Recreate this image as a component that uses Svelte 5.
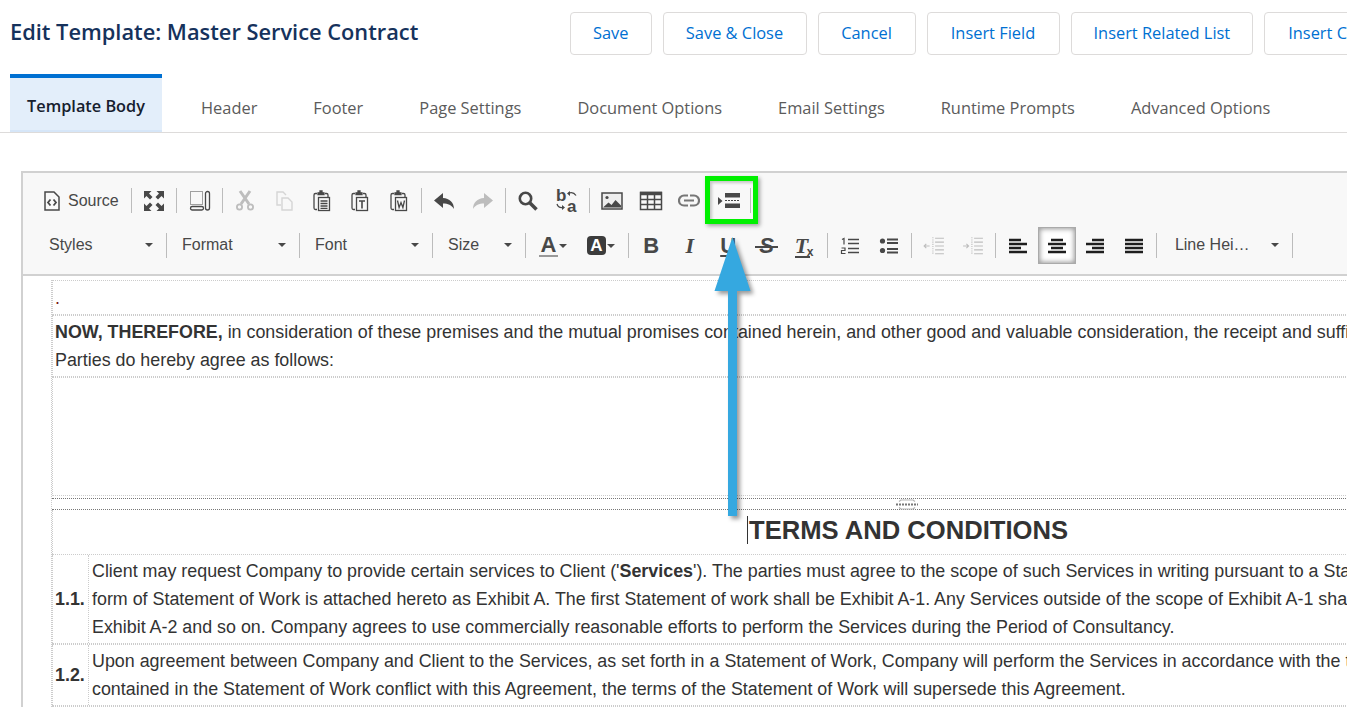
<script>
	// Template editor page: header, tabs and a CKEditor style toolbar over the document body
	const tabs = ['Header', 'Footer', 'Page Settings', 'Document Options', 'Email Settings', 'Runtime Prompts', 'Advanced Options'];
	const actions = ['Save', 'Save & Close', 'Cancel', 'Insert Field', 'Insert Related List', 'Insert Clause'];
</script>

{#snippet caret()}
	<span class="caret"></span>
{/snippet}

<div class="page">
	<header class="top">
		<h1>Edit Template: Master Service Contract</h1>
		<div class="actions">
			{#each actions as a}
				<button class="action">{a}</button>
			{/each}
		</div>
	</header>

	<nav class="tabs">
		<button class="tab active">Template Body</button>
		{#each tabs as t}
			<button class="tab">{t}</button>
		{/each}
	</nav>

	<section class="editor">
		<div class="toolbar">
			<!-- highlight around the template button -->
			<div class="highlight"></div>

			<div class="row">
				<button class="tb source">
					<svg width="18" height="20" viewBox="0 0 18 20" fill="none" stroke="currentColor">
						<path d="M2 1h9l5 5v13H2z" stroke-width="1.5" />
						<path d="M7.500 8.500 5 11.500l2.500 3M10.500 8.500l2.500 3-2.500 3" stroke-width="1.800" />
					</svg>
					<span>Source</span>
				</button>
				<i class="sep"></i>
				<button class="tb" aria-label="Maximize">
					<svg width="20" height="20" viewBox="0 0 20 20" fill="currentColor">
						<path d="M0 0h7.500L5 2.500 8.500 6 6 8.500 2.500 5 0 7.500z" />
						<path d="M20 0h-7.500L15 2.500 11.500 6 14 8.500 17.500 5 20 7.500z" />
						<path d="M0 20h7.500L5 17.500 8.500 14 6 11.500 2.500 15 0 12.500z" />
						<path d="M20 20h-7.500l2.500-2.500-3.500-3.500 2.500-2.500 3.500 3.500 2.500-2.500z" />
					</svg>
				</button>
				<i class="sep"></i>
				<button class="tb" aria-label="Show blocks">
					<svg width="22" height="22" viewBox="0 0 22 22" fill="none" stroke="currentColor">
						<rect x="1.500" y="1.500" width="12" height="13" stroke-dasharray="1 1" />
						<rect x="1.500" y="16.500" width="13" height="3.500" rx="1.700" stroke-width="1.300" />
						<rect x="16.500" y="1.500" width="4" height="18.500" rx="2" stroke-width="1.300" />
					</svg>
				</button>
				<i class="sep"></i>
				<button class="tb off" aria-label="Cut">
					<svg width="20" height="22" viewBox="0 0 20 22" fill="none" stroke="currentColor">
						<path d="M5 1l9 13M15 1 6 14" stroke-width="3" />
						<circle cx="4.500" cy="17" r="2.600" stroke-width="1.800" />
						<circle cx="15.500" cy="17" r="2.600" stroke-width="1.800" />
					</svg>
				</button>
				<button class="tb off faint" aria-label="Copy">
					<svg width="20" height="22" viewBox="0 0 20 22" fill="none" stroke="currentColor" stroke-width="1.400">
						<path d="M7 15H3V2h6l3 3" />
						<path d="M8 8h6l4 4v8H8z" />
					</svg>
				</button>
				<button class="tb" aria-label="Paste">
					<svg width="20" height="22" viewBox="0 0 20 22" fill="none" stroke="currentColor" stroke-width="1.300">
						<path d="M5 3.500H3.500a1.500 1.500 0 0 0-1.500 1.500v13a1.500 1.500 0 0 0 1.500 1.500H5M13 3.500h1.500A1.500 1.500 0 0 1 16 5v2" />
						<path d="M6 4.500V2.800h2V1h2v1.800h2v1.700z" fill="currentColor" />
						<rect x="6.500" y="7.500" width="11" height="13" fill="#f8f8f8" />
						<path d="M8.500 11h7M8.500 13.500h7M8.500 16h7M8.500 18.300h7" />
					</svg>
				</button>
				<button class="tb" aria-label="Paste as text">
					<svg width="20" height="22" viewBox="0 0 20 22" fill="none" stroke="currentColor" stroke-width="1.300">
						<path d="M5 3.500H3.500a1.500 1.500 0 0 0-1.500 1.500v13a1.500 1.500 0 0 0 1.500 1.500H5M13 3.500h1.500A1.500 1.500 0 0 1 16 5v2" />
						<path d="M6 4.500V2.800h2V1h2v1.800h2v1.700z" fill="currentColor" />
						<rect x="6.500" y="7.500" width="11" height="13" fill="#f8f8f8" />
						<path d="M9 11h6M12 11v7.500" stroke-width="1.600" />
					</svg>
				</button>
				<button class="tb" aria-label="Paste from Word">
					<svg width="20" height="22" viewBox="0 0 20 22" fill="none" stroke="currentColor" stroke-width="1.300">
						<path d="M5 3.500H3.500a1.500 1.500 0 0 0-1.500 1.500v13a1.500 1.500 0 0 0 1.500 1.500H5M13 3.500h1.500A1.500 1.500 0 0 1 16 5v2" />
						<path d="M6 4.500V2.800h2V1h2v1.800h2v1.700z" fill="currentColor" />
						<rect x="6.500" y="7.500" width="11" height="13" fill="#f8f8f8" />
						<path d="M8.500 10.500l1.600 7 1.900-5 1.900 5 1.600-7" stroke-width="1.300" />
					</svg>
				</button>
				<i class="sep"></i>
				<button class="tb" aria-label="Undo">
					<svg width="22" height="18" viewBox="0 0 22 18" fill="currentColor">
						<path d="M10 1 1 8.500 10 16v-4.500c5 0 8.500 1.500 11 5.500 0-6.500-4.500-10.500-11-11z" />
					</svg>
				</button>
				<button class="tb off" aria-label="Redo">
					<svg width="22" height="18" viewBox="0 0 22 18" fill="currentColor">
						<path d="M12 1l9 7.500L12 16v-4.500c-5 0-8.500 1.500-11 5.500 0-6.500 4.500-10.500 11-11z" />
					</svg>
				</button>
				<i class="sep"></i>
				<button class="tb" aria-label="Find">
					<svg width="22" height="22" viewBox="0 0 22 22" fill="none" stroke="currentColor">
						<circle cx="8.500" cy="8.500" r="5.700" stroke-width="2.600" />
						<path d="M13 13l6.500 6.500" stroke-width="3.600" />
					</svg>
				</button>
				<button class="tb" aria-label="Replace">
					<svg width="26" height="24" viewBox="0 0 26 24">
						<text x="2" y="12" class="glyph">b</text>
						<text x="13" y="23" class="glyph">a</text>
						<path d="M14 4.500c3-1.500 6-1 8 2M3 15c1 3 3 4 6 3.500" fill="none" stroke="currentColor" stroke-width="1.300" />
						<path d="M16 2v5l-3-2.500zM8 16v5l3-2.500z" fill="currentColor" />
					</svg>
				</button>
				<i class="sep"></i>
				<button class="tb" aria-label="Image">
					<svg width="22" height="18" viewBox="0 0 22 18">
						<rect x="1" y="1" width="20" height="16" fill="#eee" stroke="currentColor" stroke-width="1.500" />
						<circle cx="6" cy="5.500" r="1.600" fill="currentColor" />
						<path d="M2 15.500l5.500-5 3 2.500 4-5 5.500 5.500v2z" fill="currentColor" />
					</svg>
				</button>
				<button class="tb" aria-label="Table">
					<svg width="24" height="20" viewBox="0 0 24 20" fill="none" stroke="currentColor" stroke-width="1.500">
						<rect x="1.500" y="1.500" width="21" height="17" />
						<path d="M1 2.500h22" stroke-width="3.500" />
						<path d="M1.500 8.500h21M1.500 13.500h21M8.500 2v17M15.500 2v17" />
					</svg>
				</button>
				<button class="tb link" aria-label="Link">
					<svg width="22" height="13" viewBox="0 0 22 13" fill="none" stroke="currentColor" stroke-width="2.200">
						<path d="M10 1.500H6a5 5 0 0 0 0 10h4M12 1.500h4a5 5 0 0 1 0 10h-4M6 6.500h10" />
					</svg>
				</button>
				<button class="tb tpl" aria-label="Insert template">
					<svg width="22" height="16" viewBox="0 0 22 16" fill="currentColor">
						<path d="M0 4l4.500 4L0 12z" />
						<rect x="7" y="0" width="15" height="4.500" />
						<rect x="7" y="10.500" width="15" height="4.500" />
						<path d="M7 7.500h15" stroke="currentColor" stroke-dasharray="2 1" />
					</svg>
				</button>
				<i class="sep"></i>
			</div>

			<div class="row">
				<button class="combo">Styles{@render caret()}</button>
				<i class="sep"></i>
				<button class="combo">Format{@render caret()}</button>
				<i class="sep"></i>
				<button class="combo">Font{@render caret()}</button>
				<i class="sep"></i>
				<button class="combo size">Size{@render caret()}</button>
				<i class="sep"></i>
				<button class="tb wide"><span class="txt-a">A</span><span class="caret"></span></button>
				<button class="tb wide"><span class="bg-a">A</span><span class="caret"></span></button>
				<i class="sep"></i>
				<button class="tb"><span class="fmt b">B</span></button>
				<button class="tb"><span class="fmt it">I</span></button>
				<button class="tb"><span class="fmt u">U</span></button>
				<button class="tb"><span class="fmt s">S</span></button>
				<button class="tb"><span class="fmt clear"><span class="it">T</span><small>x</small></span></button>
				<i class="sep"></i>
				<button class="tb" aria-label="Numbered list">
					<svg width="20" height="18" viewBox="0 0 20 18" fill="none" stroke="currentColor" stroke-width="1.600">
						<path d="M2 2.500 4 1.500v6M1.500 11h3.500v2.500H1.500V16.500H5.500" stroke-width="1.200" />
						<path d="M8 2.500h11M8 6.500h11M8 11.500h11M8 15.500h11" />
					</svg>
				</button>
				<button class="tb" aria-label="Bulleted list">
					<svg width="20" height="18" viewBox="0 0 20 18" fill="currentColor">
						<circle cx="3.500" cy="4" r="2.600" />
						<circle cx="3.500" cy="13.500" r="2.600" />
						<path d="M8 2.500h11M8 6h11M8 12h11M8 15.500h11" stroke="currentColor" stroke-width="1.800" />
					</svg>
				</button>
				<i class="sep"></i>
				<button class="tb off" aria-label="Outdent">
					<svg width="22" height="20" viewBox="0 0 20 18" fill="none" stroke="currentColor" stroke-width="1">
						<path d="M9 1v16" stroke-dasharray="1 1" />
						<path d="M1 9h5M3 7l-2 2 2 2" />
						<path d="M11 2h8M11 5.500h8M11 9h8M11 12.500h8M11 16h8" />
					</svg>
				</button>
				<button class="tb off" aria-label="Indent">
					<svg width="22" height="20" viewBox="0 0 20 18" fill="none" stroke="currentColor" stroke-width="1">
						<path d="M9 1v16" stroke-dasharray="1 1" />
						<path d="M1 9h5M4 7l2 2-2 2" />
						<path d="M11 2h8M11 5.500h8M11 9h8M11 12.500h8M11 16h8" />
					</svg>
				</button>
				<i class="sep"></i>
				<button class="tb dark" aria-label="Align left">
					<svg width="18" height="16" viewBox="0 0 18 16" stroke="currentColor" stroke-width="2.300">
						<path d="M0 2h12M0 6h18M0 10h12M0 14h18" />
					</svg>
				</button>
				<button class="tb dark on" aria-label="Align center">
					<svg width="18" height="16" viewBox="0 0 18 16" stroke="currentColor" stroke-width="2.300">
						<path d="M3 2h12M0 6h18M3 10h12M0 14h18" />
					</svg>
				</button>
				<button class="tb dark" aria-label="Align right">
					<svg width="18" height="16" viewBox="0 0 18 16" stroke="currentColor" stroke-width="2.300">
						<path d="M6 2h12M0 6h18M6 10h12M0 14h18" />
					</svg>
				</button>
				<button class="tb dark" aria-label="Justify">
					<svg width="18" height="16" viewBox="0 0 18 16" stroke="currentColor" stroke-width="2.300">
						<path d="M0 2h18M0 6h18M0 10h18M0 14h18" />
					</svg>
				</button>
				<i class="sep"></i>
				<button class="combo lh">Line Hei…{@render caret()}</button>
				<i class="sep"></i>
			</div>
		</div>

		<div class="body">
			<div class="doc">
				<div class="block dot"><span class="red">.</span></div>
				<div class="block">
					<b>NOW, THEREFORE,</b> in consideration of these premises and the mutual promises contained herein, and other good and valuable consideration, the receipt and sufficiency of which are hereby acknowledged, the<br />
					Parties do hereby agree as follows:
				</div>
				<div class="block empty"></div>
				<div class="pagebreak">
					<svg width="22" height="11" viewBox="0 0 22 11" fill="none">
						<path d="M3 2.500 5 1h12l2 1.500M3 8.500 5 10h12l2-1.500" stroke="#b5b5b5" stroke-width="1.200" />
						<path d="M0 5.500h22" stroke="#777" stroke-width="2" stroke-dasharray="2 1" />
					</svg>
				</div>
				<h2><span class="cursor"></span>TERMS AND CONDITIONS</h2>
				<div class="clause">
					<div class="num">1.1.</div>
					<div class="text">
						Client may request Company to provide certain services to Client ('<b>Services</b>'). The parties must agree to the scope of such Services in writing pursuant to a Statement of Work. The<br />
						form of Statement of Work is attached hereto as Exhibit A. The first Statement of work shall be Exhibit A-1. Any Services outside of the scope of Exhibit A-1 shall be set out in<br />
						Exhibit A-2 and so on. Company agrees to use commercially reasonable efforts to perform the Services during the Period of Consultancy.
					</div>
				</div>
				<div class="clause">
					<div class="num">1.2.</div>
					<div class="text">
						Upon agreement between Company and Client to the Services, as set forth in a Statement of Work, Company will perform the Services in accordance with the terms. If any terms<br />
						contained in the Statement of Work conflict with this Agreement, the terms of the Statement of Work will supersede this Agreement.
					</div>
				</div>
				<div class="rule"></div>
			</div>
		</div>
	</section>

	<!-- callout arrow pointing at the toolbar -->
	<svg class="arrow" width="38" height="280" viewBox="0 0 38 280">
		<path d="M18.500 0 .5 54H14v225h9V54h13.500z" fill="#35a8e0" />
	</svg>
</div>

<style>
	:global(body) {
		margin: 0;
		background: #fff;
	}

	.page {
		position: relative;
		width: 1347px;
		height: 709px;
		overflow: hidden;
		background: #fff;
		font-family: 'Open Sans', 'Liberation Sans', sans-serif;
	}

	button {
		font: inherit;
		background: none;
		border: none;
		padding: 0;
		margin: 0;
	}

	.top {
		display: flex;
		align-items: center;
		height: 66px;
		padding-left: 10px;
	}

	h1 {
		flex: none;
		width: 560px;
		margin: 0 0 4px;
		font-size: 21.8px;
		font-weight: 600;
		color: #16325c;
		white-space: nowrap;
	}

	.actions {
		display: flex;
		flex: none;
		gap: 11px;
	}

	.action {
		flex: none;
		height: 43px;
		padding: 0 22px 2px;
		border: 1px solid #dddbda;
		border-radius: 4px;
		background: #fff;
		color: #0070d2;
		font-size: 16.4px;
		white-space: nowrap;
	}

	.action:nth-child(2) {
		width: 144px;
	}

	.action:nth-child(3) {
		width: 98px;
	}

	.action:nth-child(4) {
		width: 133px;
	}

	.action:nth-child(6) {
		padding-left: 23px;
	}

	.tabs {
		display: flex;
		margin-top: 8px;
		height: 58px;
		padding-left: 10px;
		border-bottom: 1px solid #dddbda;
	}

	.tab {
		flex: none;
		padding: 9px 28px 0;
		font-size: 16.4px;
		color: #5b5b5b;
		white-space: nowrap;
	}

	.tab.active {
		padding: 3px 16px 0;
		width: 152px;
		background: #e3eefa;
		border-top: 4px solid #0070d2;
		border-bottom: 2px solid #d6e6f8;
		color: #16202e;
		font-size: 16.3px;
		font-weight: 600;
		margin-right: 11px;
	}

	.editor {
		width: 1760px;
		margin: 38px 0 0 21px;
		border: 2px solid #d1d1d1;
		border-bottom: none;
		font-family: 'Liberation Sans', Arial, sans-serif;
	}

	.toolbar {
		position: relative;
		padding: 9px 0 10px 14px;
		background: #f8f8f8;
		border-bottom: 2px solid #d1d1d1;
	}

	.row {
		display: flex;
		align-items: center;
		height: 37px;
	}

	.row + .row {
		margin-top: 8px;
	}

	.sep {
		flex: none;
		width: 1px;
		height: 25px;
		margin: 0 3px;
		background: #bcbcbc;
	}

	.tb {
		display: flex;
		flex: none;
		align-items: center;
		justify-content: center;
		width: 38.46px;
		height: 37px;
		color: #484848;
	}

	.tb svg {
		display: block;
	}

	.tb.off {
		color: #bdbdbd;
	}

	.tb.faint {
		color: #d5d5d5;
	}

	.tb.dark {
		color: #1e1e1e;
	}

	.tb.link {
		color: #777;
	}

	.tb.tpl svg {
		margin-left: 3px;
	}

	.tb.on {
		background: #fff;
		border: 1px solid #aaa;
		box-shadow: inset 0 0 5px 1px #999;
		box-sizing: border-box;
	}

	.tb.source {
		justify-content: flex-start;
		gap: 7px;
		width: 91px;
		padding-left: 6px;
		box-sizing: border-box;
		font-size: 16px;
		color: #484848;
	}

	.tb.wide {
		width: 48px;
		gap: 1px;
	}

	.combo {
		display: flex;
		flex: none;
		align-items: center;
		justify-content: space-between;
		box-sizing: border-box;
		width: 126px;
		height: 37px;
		padding: 0 10px 2px 12px;
		font-size: 16px;
		color: #484848;
		white-space: nowrap;
	}

	.combo.size {
		width: 86px;
	}

	.combo.lh {
		width: 129px;
		padding-left: 15px;
	}

	.caret {
		width: 0;
		height: 0;
		border-left: 4px solid transparent;
		border-right: 4px solid transparent;
		border-top: 4px solid #484848;
	}

	.glyph {
		font: 700 17px 'Liberation Sans', sans-serif;
		fill: currentColor;
	}

	.fmt {
		position: relative;
		font-size: 22px;
		font-weight: 700;
		line-height: 1;
		color: #484848;
	}

	.fmt.it,
	.fmt .it {
		font-style: italic;
		font-family: 'Liberation Serif', serif;
	}

	.fmt.u {
		text-decoration: underline;
	}

	.fmt.s {
		font-style: italic;
	}

	/* strike bar runs wider than the letter */
	.fmt.s::after {
		content: '';
		position: absolute;
		left: -4px;
		right: -4px;
		top: 11px;
		height: 2px;
		background: #484848;
	}

	.fmt.clear {
		padding-right: 7px;
	}

	.fmt.clear::after {
		content: '';
		position: absolute;
		left: 0;
		width: 15px;
		bottom: -1px;
		height: 2px;
		background: #484848;
	}

	.fmt small {
		position: absolute;
		left: 12px;
		bottom: -2px;
		font: 700 12px 'Liberation Sans', sans-serif;
	}

	.txt-a {
		font-size: 22px;
		font-weight: 700;
		line-height: 19px;
		padding: 0 2px 1px;
		color: #484848;
		border-bottom: 2px solid #999;
	}

	.bg-a {
		display: block;
		width: 19px;
		height: 19px;
		border-radius: 4px;
		background: #3c3c3c;
		color: #fff;
		font-size: 17px;
		font-weight: 700;
		line-height: 19px;
		text-align: center;
	}

	.highlight {
		position: absolute;
		left: 682px;
		top: 3px;
		box-sizing: border-box;
		width: 53px;
		height: 48px;
		border: 5px solid #00f000;
		box-shadow: 2px 2px 4px rgba(0, 0, 0, 0.35), inset 2px 2px 3px rgba(0, 0, 0, 0.2);
		z-index: 2;
	}

	.body {
		padding: 4px 0 0 28px;
		background: #fff;
		font-size: 17.87px;
		line-height: 28px;
		color: #333;
		white-space: nowrap;
	}

	.doc {
		width: 1710px;
		border-left: 1px dotted #ccc;
	}

	.block {
		box-sizing: border-box;
		padding: 2px 2px;
		border: 1px dotted #ccc;
	}

	.dot {
		height: 35px;
		padding-top: 3px;
	}

	.red {
		color: #7a1515;
	}

	.empty {
		height: 119px;
	}

	.pagebreak {
		display: flex;
		align-items: center;
		justify-content: center;
		box-sizing: border-box;
		height: 12px;
		margin-top: 2px;
		border-top: 1px dotted #777;
		border-bottom: 1px dotted #777;
	}

	h2 {
		display: flex;
		align-items: center;
		justify-content: center;
		box-sizing: border-box;
		height: 44px;
		margin: 0;
		padding-bottom: 4px;
		border-left: 1px dotted #ccc;
		font-size: 25.6px;
		font-weight: 700;
		line-height: 28px;
		color: #333;
	}

	.cursor {
		width: 1px;
		height: 28px;
		margin-right: 1px;
		background: #333;
	}

	.clause {
		display: flex;
		align-items: stretch;
		border-top: 1px dotted #ccc;
		border-bottom: 1px dotted #ccc;
	}

	.num {
		display: flex;
		flex: none;
		align-items: center;
		box-sizing: border-box;
		width: 36px;
		padding-left: 2px;
		border-left: 1px dotted #ccc;
		font-weight: 700;
	}

	.text {
		padding: 2px 3px;
		border-left: 1px dotted #ccc;
	}

	.rule {
		border-top: 1px dotted #ccc;
	}

	.arrow {
		position: absolute;
		left: 714px;
		top: 237px;
		overflow: visible;
		filter: drop-shadow(3px 3px 2px rgba(0, 0, 0, 0.4));
	}
</style>
